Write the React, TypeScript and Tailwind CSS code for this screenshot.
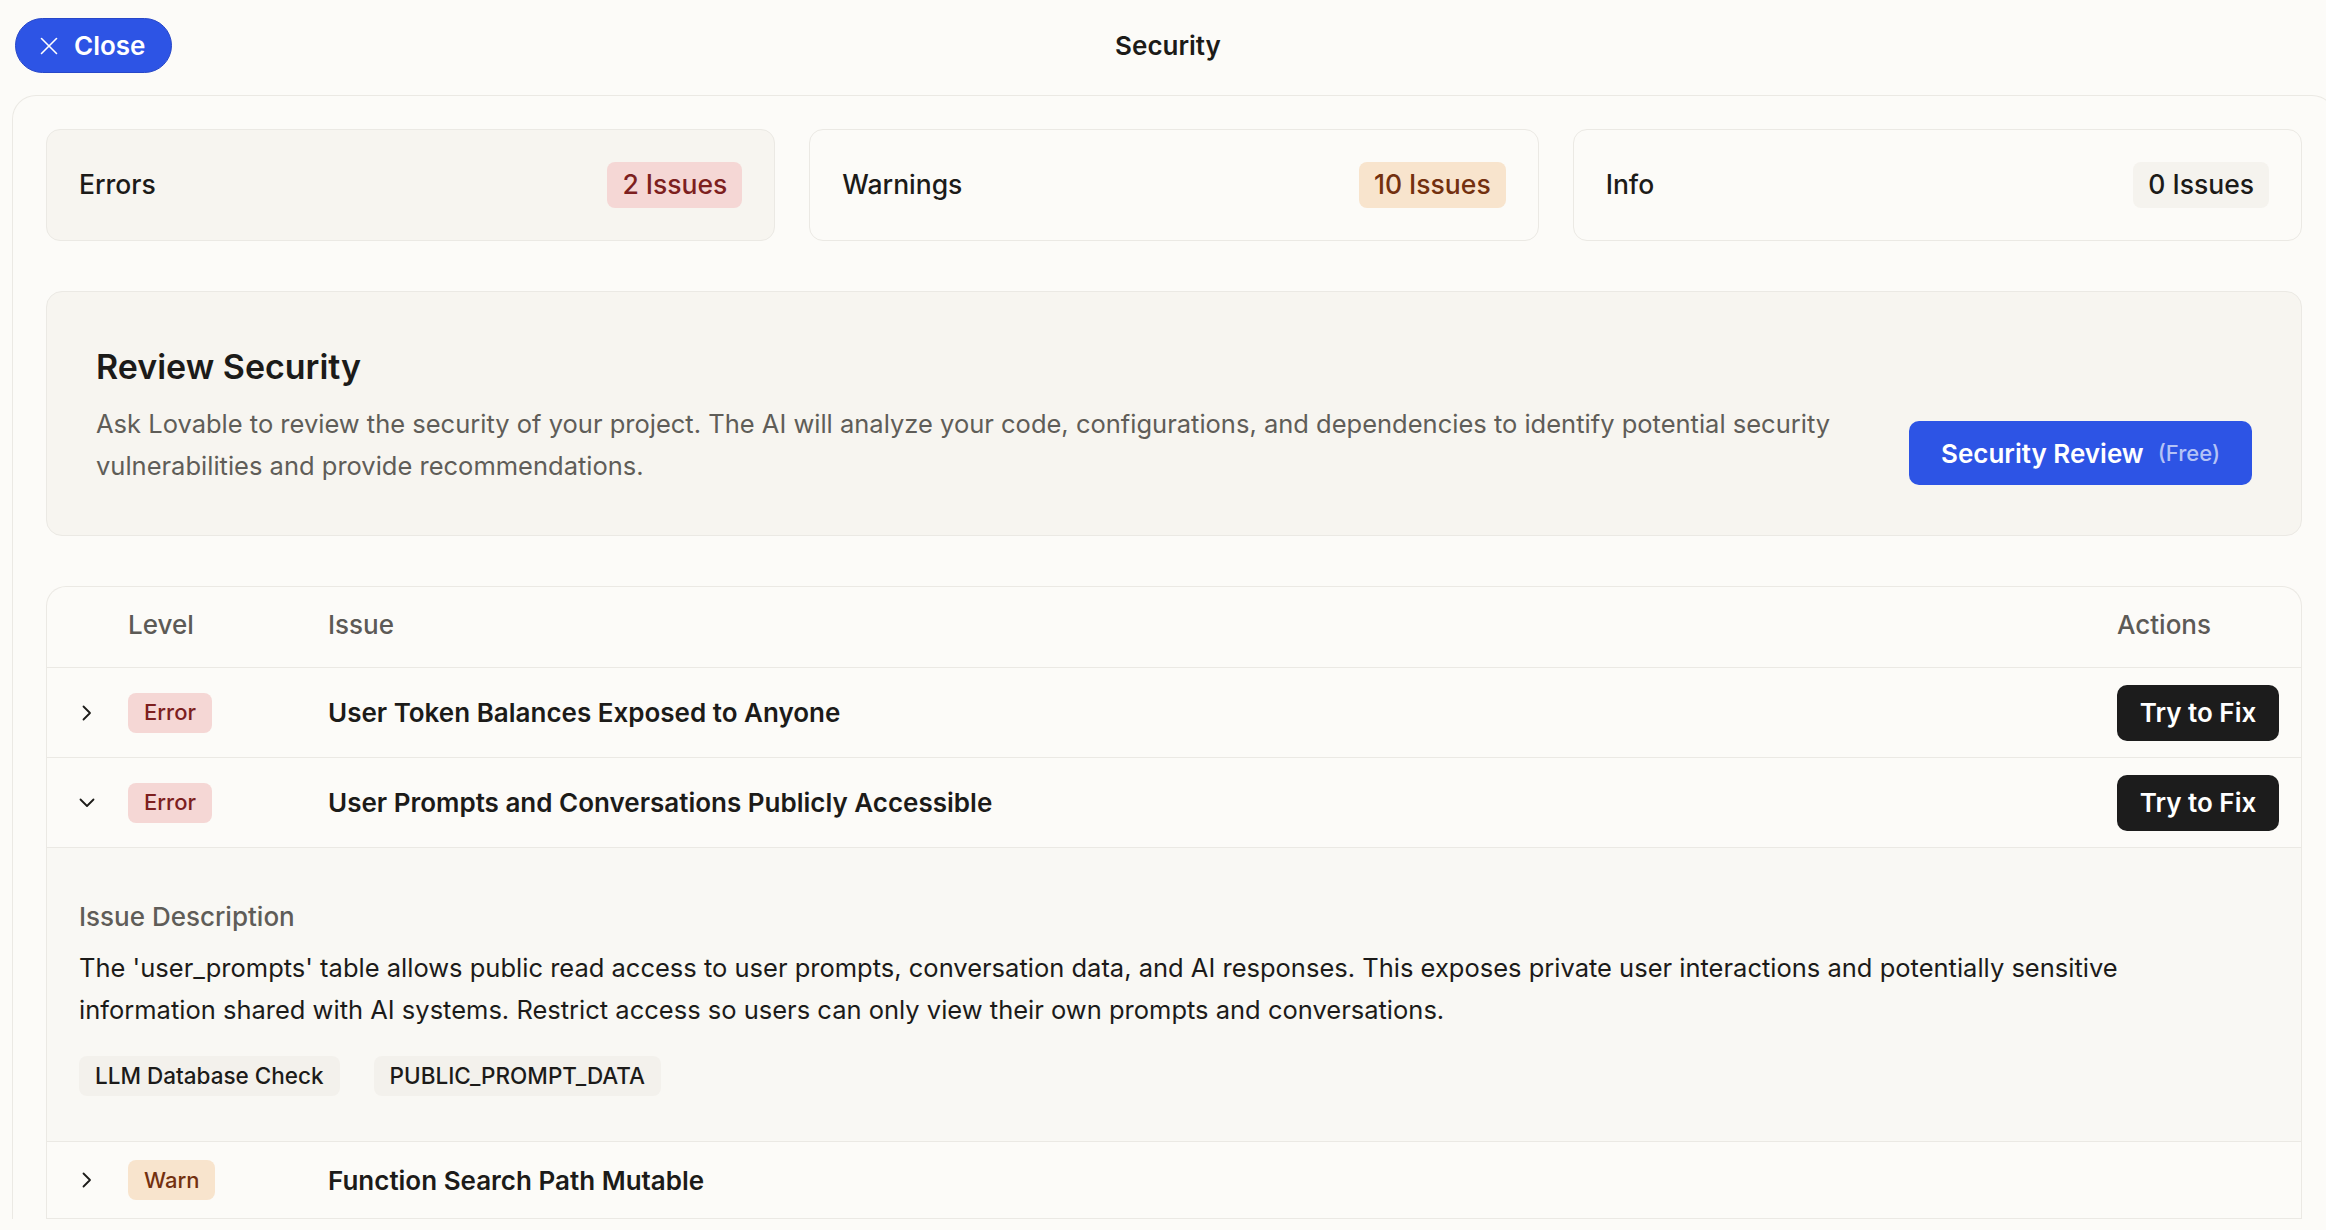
import React from 'react';

type Level = 'Error' | 'Warn';

const levelBadge: Record<Level, string> = {
  Error: 'bg-[#f5d7d5] text-[#7d1f1f]',
  Warn: 'bg-[#f8e4cd] text-[#73300f]',
};

const summary = [
  { label: 'Errors', count: '2 Issues', card: 'bg-[#f7f5f0]', badge: 'bg-[#f5d7d5] text-[#7d1f1f]' },
  { label: 'Warnings', count: '10 Issues', card: 'bg-[#fcfbf8]', badge: 'bg-[#f8e4cd] text-[#73300f]' },
  { label: 'Info', count: '0 Issues', card: 'bg-[#fcfbf8]', badge: 'bg-[#f5f3ee] text-[#1c1b19]' },
];

const Chevron = ({ open }: { open?: boolean }) => (
  <svg width="28" height="28" viewBox="0 0 28 28" fill="none" stroke="currentColor" strokeWidth="1.8" strokeLinecap="round" strokeLinejoin="round">
    {open ? <polyline points="7.5,10.5 14,17 20.5,10.5" /> : <polyline points="10.5,7.5 17,14 10.5,20.5" />}
  </svg>
);

const CloseIcon = () => (
  <svg width="18" height="18" viewBox="0 0 18 18" fill="none" stroke="currentColor" strokeWidth="1.6" strokeLinecap="round">
    <line x1="1.5" y1="1.5" x2="16.5" y2="16.5" />
    <line x1="16.5" y1="1.5" x2="1.5" y2="16.5" />
  </svg>
);

const LevelBadge = ({ level }: { level: Level }) => (
  <span className={`inline-flex h-[40px] items-center rounded-[8px] px-[16px] text-[22px] font-medium ${levelBadge[level]}`}>
    {level}
  </span>
);

const IssueRow = ({ level, title, open, fix }: { level: Level; title: string; open?: boolean; fix?: boolean }) => (
  <div className={`flex items-center border-b border-[#ebe9e4] pl-[26px] pr-[22px] ${fix ? 'h-[90px]' : 'h-[77px]'}`}>
    <div className="flex w-[28px] shrink-0 justify-center text-[#1c1b19]">
      <Chevron open={open} />
    </div>
    <div className="ml-[27px] w-[200px] shrink-0">
      <LevelBadge level={level} />
    </div>
    <div className="flex-1 text-[26px] font-semibold text-[#1c1b19]">{title}</div>
    <div className="w-[162px] shrink-0">
      {fix && (
        <button className="flex h-[56px] w-[162px] items-center justify-center rounded-[10px] bg-[#1c1c1c] text-[26px] font-semibold text-white">
          Try to Fix
        </button>
      )}
    </div>
  </div>
);

const App: React.FC = () => {
  return (
    <div className="h-screen overflow-hidden bg-[#fcfbf8] [font-family:Inter,'Noto_Sans',sans-serif] text-[#1c1b19]">
      <header className="relative flex items-center px-[15px] pt-[18px]">
        <button className="flex h-[55px] items-center gap-[16px] rounded-full border border-[#2747c9] bg-[#2d54e5] pl-[24px] pr-[26px] text-[26px] font-semibold text-white">
          <CloseIcon />
          Close
        </button>
        <h1 className="pointer-events-none absolute left-0 right-0 top-[18px] flex h-[55px] items-center justify-center pl-[10px] text-[26px] font-semibold">
          Security
        </h1>
      </header>

      <main className="ml-[12px] mr-[-10px] mt-[22px] rounded-t-[24px] border border-b-0 border-[#ebe9e4] px-[33px] pt-[33px]">
        <div className="grid grid-cols-3 gap-[34px]">
          {summary.map((s) => (
            <div key={s.label} className={`flex h-[112px] items-center justify-between rounded-[14px] border border-[#ebe9e4] px-[32px] ${s.card}`}>
              <span className="text-[26.5px] font-medium">{s.label}</span>
              <span className={`flex h-[46px] items-center rounded-[8px] px-[15px] text-[26.5px] font-medium ${s.badge}`}>{s.count}</span>
            </div>
          ))}
        </div>

        <section className="mt-[50px] rounded-[16px] border border-[#ebe9e4] bg-[#f7f5f0] px-[49px] pb-[48px] pt-[54px]">
          <h2 className="text-[34px] font-semibold leading-[42px]">Review Security</h2>
          <div className="mt-[15px] flex items-start gap-[48px]">
            <p className="flex-1 text-[25.5px] leading-[42px] text-[#5f5d58]">
              Ask Lovable to review the security of your project. The AI will analyze your code, configurations, and dependencies to identify potential security vulnerabilities and provide recommendations.
            </p>
            <button className="mt-[18px] flex h-[64px] shrink-0 items-center gap-[14px] rounded-[10px] bg-[#2d54e5] px-[32px] text-white">
              <span className="text-[26px] font-semibold">Security Review</span>
              <span className="text-[22px] font-medium text-[#b4c3f6]">(Free)</span>
            </button>
          </div>
        </section>

        <section className="mt-[50px] rounded-t-[20px] border border-b-0 border-[#ebe9e4]">
          <div className="flex h-[81px] items-center border-b border-[#ebe9e4] pb-[6px] pl-[26px] pr-[22px] text-[26px] font-medium text-[#5c5a56]">
            <div className="w-[28px] shrink-0" />
            <div className="ml-[27px] w-[200px] shrink-0">Level</div>
            <div className="flex-1">Issue</div>
            <div className="w-[162px] shrink-0">Actions</div>
          </div>

          <IssueRow level="Error" title="User Token Balances Exposed to Anyone" fix />
          <IssueRow level="Error" title="User Prompts and Conversations Publicly Accessible" fix open />

          <div className="border-b border-[#ebe9e4] bg-[#f9f8f4] pb-[45px] pl-[32px] pr-[120px] pt-[50px]">
            <div className="text-[26px] font-medium leading-[38px] text-[#5f5d58]">Issue Description</div>
            <p className="mt-[11px] text-[25.5px] leading-[41.5px] text-[#1c1b19]">
              The 'user_prompts' table allows public read access to user prompts, conversation data, and AI responses. This exposes private user interactions and potentially sensitive information shared with AI systems. Restrict access so users can only view their own prompts and conversations.
            </p>
            <div className="mt-[26px] flex gap-[34px]">
              <span className="flex h-[40px] items-center rounded-[8px] bg-[#f3f1ec] px-[16px] text-[22.5px] font-medium">LLM Database Check</span>
              <span className="flex h-[40px] items-center rounded-[8px] bg-[#f3f1ec] px-[16px] text-[22.5px] font-medium">PUBLIC_PROMPT_DATA</span>
            </div>
          </div>

          <IssueRow level="Warn" title="Function Search Path Mutable" />
        </section>
      </main>
    </div>
  );
};

export default App;
